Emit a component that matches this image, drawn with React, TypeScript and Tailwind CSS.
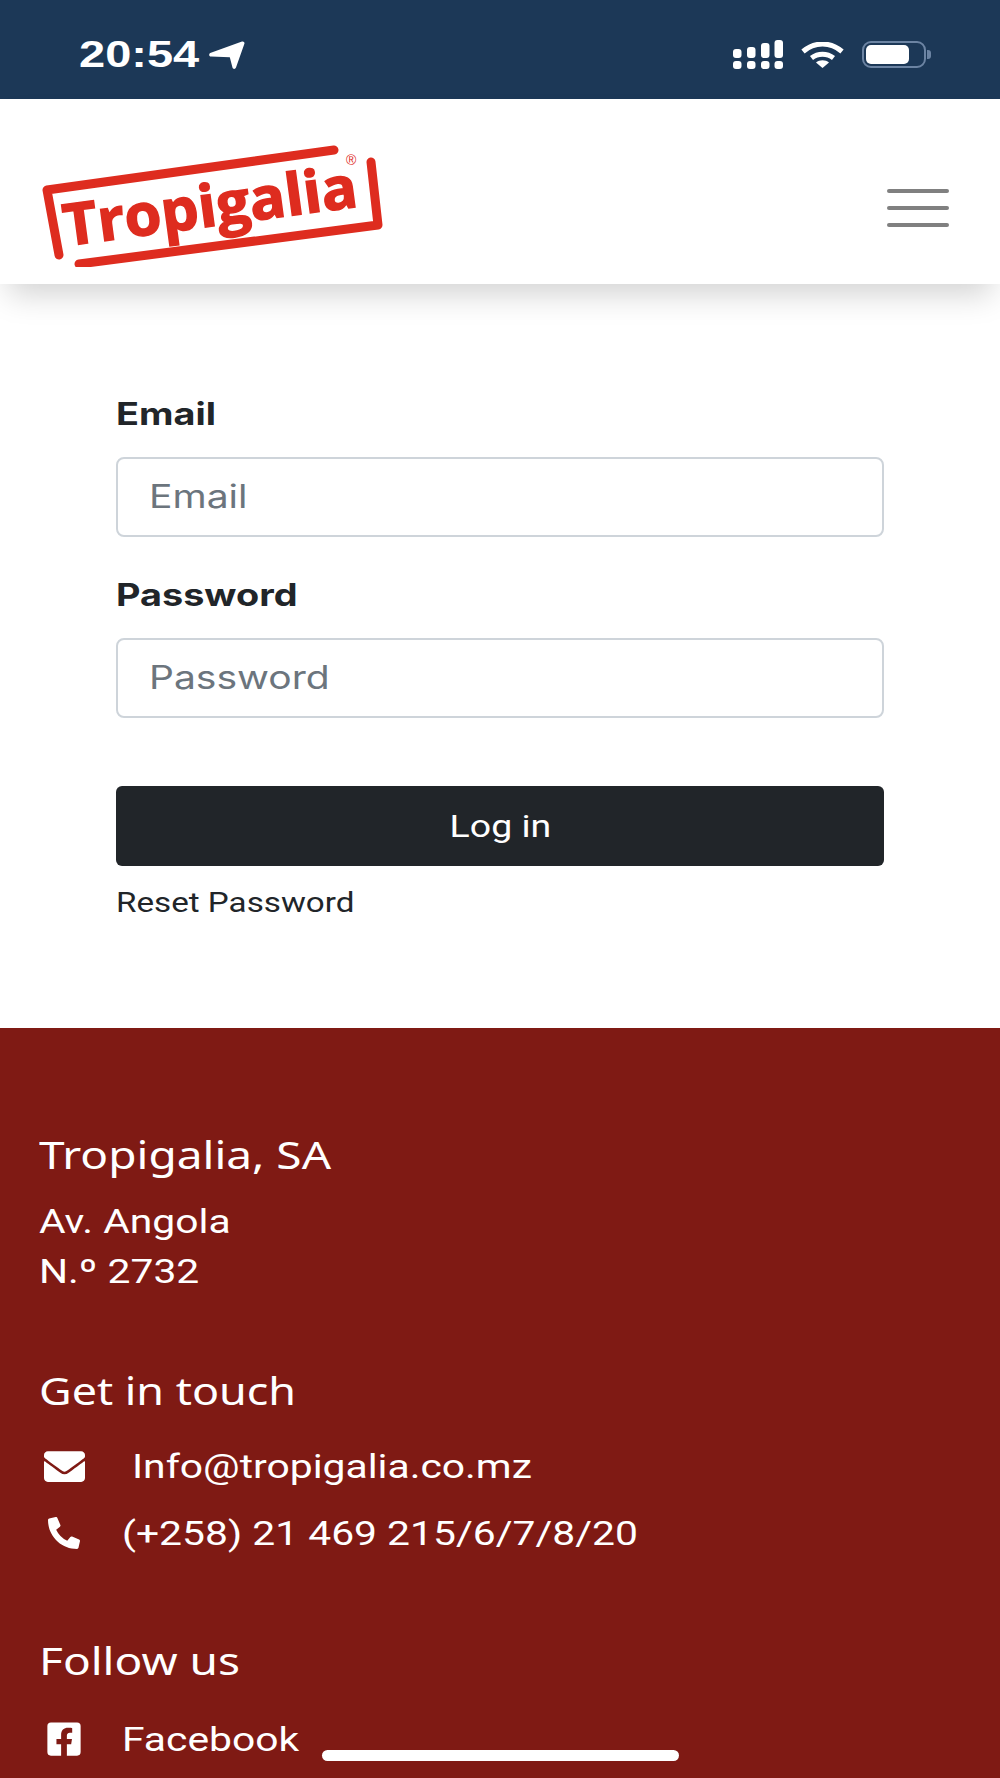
import React from "react";
import { FaEnvelope, FaPhoneAlt, FaFacebookSquare } from "react-icons/fa";

const roboto = "font-['Roboto',sans-serif]";
const inter = "font-['Inter',sans-serif]";
const stretch = "inline-block origin-left scale-x-[1.22] whitespace-nowrap";
const body = "inline-block origin-left scale-x-[1.2] whitespace-nowrap";
const head = "inline-block origin-left scale-x-[1.18] whitespace-nowrap";

function Signal() {
  const xs = [0, 14, 28, 41.5];
  const tops = [9, 7, 3, 0];
  return (
    <svg width="50" height="29" viewBox="0 0 50 29" fill="#fff">
      {xs.map((x, i) => (
        <rect key={i} x={x} y={tops[i]} width="8.5" height={18 - tops[i]} rx="3" />
      ))}
      {xs.map((x, i) => (
        <rect key={"b" + i} x={x} y="21" width="8.5" height="8" rx="3" />
      ))}
    </svg>
  );
}

function Wifi() {
  return (
    <svg width="43" height="26" viewBox="0 0 43 26" fill="none" stroke="#fff" strokeWidth="5">
      <path d="M2 9.5C13.5 -0.5 29.5 -0.5 41 9.5" />
      <path d="M10.5 16C17 11 26 11 32.5 16" />
      <path d="M15 20.5L21.5 26L28 20.5C24.5 17.5 18.5 17.5 15 20.5Z" fill="#fff" stroke="none" />
    </svg>
  );
}

function Battery() {
  return (
    <div className="flex items-center gap-[1px]">
      <div className="w-[64px] h-[27px] rounded-[9px] border-[2px] border-[#6c84a3] p-[2px]">
        <div className="w-[43px] h-full rounded-[5px] bg-white" />
      </div>
      <div className="w-[4px] h-[9px] bg-[#6c84a3] rounded-r-[3px]" />
    </div>
  );
}

function Logo() {
  return (
    <svg width="350" height="130" viewBox="0 0 350 130" className="block">
      <g fill="none" stroke="#de2c1f" strokeWidth="9" strokeLinecap="round" strokeLinejoin="round">
        <path d="M20 118L8 53L295 13" />
        <path d="M40 127L339 88L332 25" />
      </g>
      <text
        x="27"
        y="109"
        transform="rotate(-7.7 27 109)"
        fontFamily="'Open Sans', sans-serif"
        fontWeight="700"
        fontSize="58"
        textLength="296"
        lengthAdjust="spacingAndGlyphs"
        fill="#de2c1f"
        stroke="#de2c1f"
        strokeWidth="1.5"
      >
        Tropigalia
      </text>
      <text x="307" y="28" fontFamily="'Liberation Sans', sans-serif" fontSize="14" fill="#de2c1f">®</text>
    </svg>
  );
}

function Field({ label, top }: { label: string; top: string }) {
  return (
    <div className={top}>
      <div className={`h-[48px] flex items-center font-bold text-[31px] text-[#212529] ${inter}`}>
        <span className={stretch}>{label}</span>
      </div>
      <div className={`mt-[19px] h-[80px] rounded-[8px] border-[2px] border-[#ced4da] bg-white flex items-center pl-[31px] text-[32px] text-[#6c757d] ${inter}`}>
        <span className={stretch}>{label}</span>
      </div>
    </div>
  );
}

export default function App() {
  return (
    <div className="w-[1000px] h-[1778px] overflow-hidden bg-white flex flex-col">
      <div className="h-[99px] shrink-0 bg-[#1c3857] flex items-center justify-between pt-[10px] pl-[79px] pr-[69px]">
        <div className="flex items-center">
          <span className="w-[118px] font-['Liberation_Sans',sans-serif] font-bold text-[37px] leading-none text-white inline-block origin-left scale-x-[1.27]">20:54</span>
          <svg width="36" height="28" viewBox="0 0 36 28" fill="#fff" className="ml-[12px]">
            <path d="M33 0.5C34.5 0 35.8 1.2 35.4 2.8L27 26.5C26.3 28.5 23.8 28.3 23.4 26.3L20.8 16.2L2 15.6C0 15.5 -0.5 13 1.2 12Z" />
          </svg>
        </div>
        <div className="flex items-center gap-[18px]">
          <Signal />
          <Wifi />
          <Battery />
        </div>
      </div>

      <header className="relative z-10 h-[185px] shrink-0 bg-white flex items-center justify-between pt-[21px] pl-[39px] pr-[51px] shadow-[0_18px_30px_-8px_rgba(0,0,0,0.18)]">
        <Logo />
        <div className="flex flex-col gap-[13.5px] mt-[12px]">
          <div className="w-[62px] h-[3.5px] rounded-full bg-[#808080]" />
          <div className="w-[62px] h-[3.5px] rounded-full bg-[#808080]" />
          <div className="w-[62px] h-[3.5px] rounded-full bg-[#808080]" />
        </div>
      </header>

      <main className="h-[744px] shrink-0 bg-white px-[116px] pt-[106px]">
        <Field label="Email" top="" />
        <Field label="Password" top="mt-[34px]" />
        <button className="mt-[68px] w-full h-[80px] rounded-[6px] bg-[#212529] text-white text-[32px] font-['Roboto',sans-serif] flex items-center justify-center">
          <span className="inline-block scale-x-[1.17] whitespace-nowrap">Log in</span>
        </button>
        <div className={`mt-[19px] h-[36px] flex items-center text-[28px] text-[#212529] ${roboto}`}>
          <span className="inline-block origin-left scale-x-[1.185] whitespace-nowrap">Reset Password</span>
        </div>
      </main>

      <footer className="flex-1 bg-[#7f1a14] text-white pl-[39px] pt-[100px] relative">
        <div className="h-[52px] flex items-center text-[39px] font-['Noto_Sans',sans-serif]">
          <span className={head}>Tropigalia, SA</span>
        </div>
        <div className={`mt-[16px] h-[50px] flex items-center text-[34px] ${roboto}`}>
          <span className={body}>Av. Angola</span>
        </div>
        <div className={`h-[50px] flex items-center text-[34px] ${roboto}`}>
          <span className={body}>N.º 2732</span>
        </div>
        <div className="mt-[68px] h-[52px] flex items-center text-[39px] font-['Noto_Sans',sans-serif]">
          <span className="inline-block origin-left scale-x-[1.15] whitespace-nowrap">Get in touch</span>
        </div>
        <div className={`mt-[28px] h-[44px] flex items-center text-[34px] ${roboto}`}>
          <FaEnvelope className="ml-[5px] w-[41px] h-[41px] shrink-0" />
          <span className={`ml-[47px] ${body}`}>Info@tropigalia.co.mz</span>
        </div>
        <div className={`mt-[23px] h-[44px] flex items-center text-[34px] ${roboto}`}>
          <FaPhoneAlt className="ml-[9px] w-[32px] h-[32px] shrink-0" />
          <span className={`ml-[42px] ${body}`}>(+258) 21 469 215/6/7/8/20</span>
        </div>
        <div className="mt-[79px] h-[52px] flex items-center text-[39px] font-['Noto_Sans',sans-serif]">
          <span className={head}>Follow us</span>
        </div>
        <div className={`mt-[31px] h-[44px] flex items-center text-[34px] ${roboto}`}>
          <FaFacebookSquare className="ml-[6px] w-[38px] h-[38px] shrink-0" />
          <span className={`ml-[39px] ${body}`}>Facebook</span>
        </div>
        <div className="absolute left-[322px] top-[722px] w-[357px] h-[11px] rounded-full bg-white" />
      </footer>
    </div>
  );
}
